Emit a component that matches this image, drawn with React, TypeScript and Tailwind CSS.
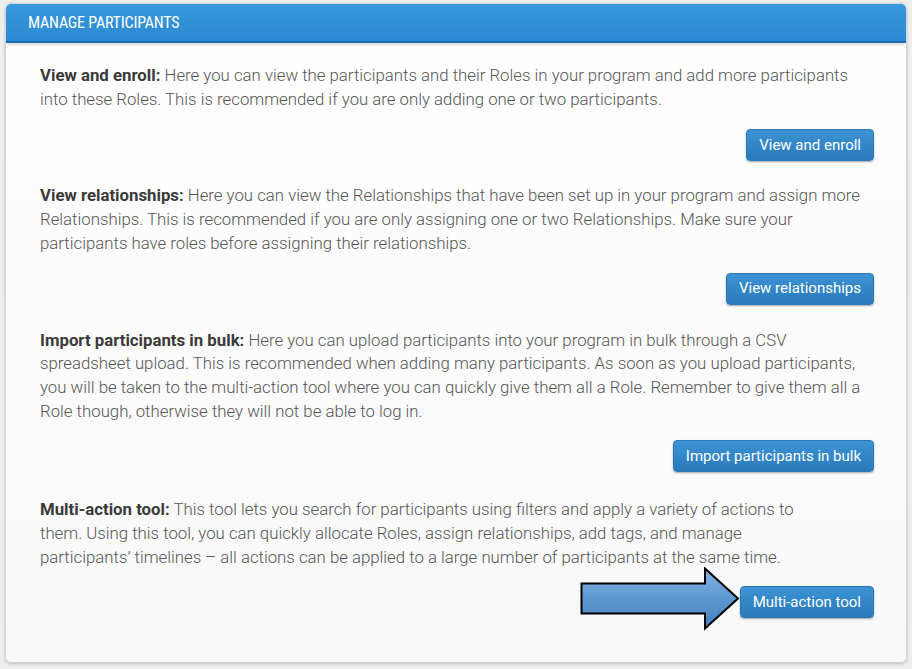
import React from "react";

const body = "font-['Roboto',sans-serif]";

function Btn({ children }: { children: React.ReactNode }) {
  return (
    <button className="h-[32px] px-[12px] rounded-[4px] bg-gradient-to-b from-[#3c93d4] to-[#2a7abb] text-white text-[15px] leading-none font-['Roboto',sans-serif] shadow-[0_1px_2px_rgba(0,0,0,0.35)] border border-[#2a78b8]">
      {children}
    </button>
  );
}

function Section({
  title,
  text,
  button,
  gapTop,
  arrow,
}: {
  title: string;
  text: string;
  button: string;
  gapTop: string;
  arrow?: boolean;
}) {
  return (
    <div className="flex flex-col">
      <p className="text-[16.8px] leading-[23.7px] font-light text-[#555555]">
        <span className="font-bold text-[#3a3a3a]">{title}</span> {text}
      </p>
      <div className={`flex justify-end ${gapTop}`}>
        <div className="relative">
          {arrow && (
            <svg
              className="absolute left-[-160px] top-[-19px]"
              width="160"
              height="64"
              viewBox="0 0 160 64"
            >
              <defs>
                <linearGradient id="ag" x1="0" y1="0" x2="0" y2="1">
                  <stop offset="0" stopColor="#7fb2e3" />
                  <stop offset="1" stopColor="#3f7fbf" />
                </linearGradient>
              </defs>
              <path
                d="M1.5 16.5 L125 16.5 L125 1.5 L158 31.5 L125 61.5 L125 46.5 L1.5 46.5 Z"
                fill="url(#ag)"
                stroke="#000"
                strokeWidth="2"
                strokeLinejoin="miter"
              />
            </svg>
          )}
          <Btn>{button}</Btn>
        </div>
      </div>
    </div>
  );
}

export default function App() {
  return (
    <div className={`w-[912px] h-[669px] bg-[#eeeeee] pt-[3px] px-[5px] ${body}`}>
      <div className="w-[902px] h-[660px] rounded-[6px] border border-[#d4d4d4] bg-gradient-to-b from-[#ffffff] to-[#f8f8f8] shadow-[0_1px_3px_rgba(0,0,0,0.2)] overflow-hidden flex flex-col">
        <div className="h-[39px] bg-gradient-to-b from-[#3899dc] to-[#2b89d1] border-b-2 border-[#1e6aa8] flex items-center pl-[22px] shadow-[0_2px_3px_rgba(0,0,0,0.15)]">
          <span className="text-white text-[16px] font-['Liberation_Sans_Narrow','Roboto_Condensed',sans-serif] tracking-[-0.2px]">
            MANAGE PARTICIPANTS
          </span>
        </div>
        <div className="pl-[34px] pr-[32px] pt-[21px] flex flex-col">
          <Section
            title="View and enroll:"
            text="Here you can view the participants and their Roles in your program and add more participants into these Roles. This is recommended if you are only adding one or two participants."
            button="View and enroll"
            gapTop="mt-[18px]"
          />
          <div className="h-[23px]" />
          <Section
            title="View relationships:"
            text="Here you can view the Relationships that have been set up in your program and assign more Relationships. This is recommended if you are only assigning one or two Relationships. Make sure your participants have roles before assigning their relationships."
            button="View relationships"
            gapTop="mt-[17px]"
          />
          <div className="h-[24px]" />
          <Section
            title="Import participants in bulk:"
            text="Here you can upload participants into your program in bulk through a CSV spreadsheet upload. This is recommended when adding many participants. As soon as you upload participants, you will be taken to the multi-action tool where you can quickly give them all a Role. Remember to give them all a Role though, otherwise they will not be able to log in."
            button="Import participants in bulk"
            gapTop="mt-[17px]"
          />
          <div className="h-[26px]" />
          <div className="pr-[70px]">
            <Section
              title="Multi-action tool:"
              text="This tool lets you search for participants using filters and apply a variety of actions to them. Using this tool, you can quickly allocate Roles, assign relationships, add tags, and manage participants’ timelines – all actions can be applied to a large number of participants at the same time."
              button="Multi-action tool"
              gapTop="mt-[17px] -mr-[70px]"
              arrow
            />
          </div>
        </div>
      </div>
    </div>
  );
}
